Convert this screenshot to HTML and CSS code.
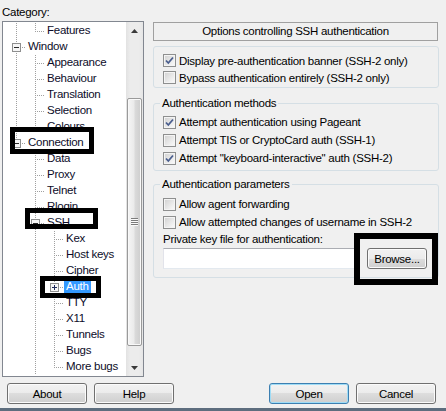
FILE: index.html
```html
<!DOCTYPE html>
<html>
<head>
<meta charset="utf-8">
<link rel="stylesheet" href="styles.css">
</head>
<body>
<div class="dlg">
  <div class="main">
    <div class="left">
      <div class="cat-label">Category:</div>
      <div class="treebox">
        <div class="tree">
          <div class="row"><span class="g v"></span><span class="c l"></span><span class="txt">Features</span></div>
          <div class="row"><span class="c t"><svg class="exp" width="9" height="9" viewBox="0 0 9 9"><rect x=".5" y=".5" width="8" height="8" fill="#f6f6f6" stroke="#8e8f8f"/><path d="M2 4.5h5" stroke="#2a2a2a"/></svg></span><span class="txt">Window</span></div>
          <div class="row"><span class="g v"></span><span class="c t"></span><span class="txt">Appearance</span></div>
          <div class="row"><span class="g v"></span><span class="c t"></span><span class="txt">Behaviour</span></div>
          <div class="row"><span class="g v"></span><span class="c t"></span><span class="txt">Translation</span></div>
          <div class="row"><span class="g v"></span><span class="c t"></span><span class="txt">Selection</span></div>
          <div class="row"><span class="g v"></span><span class="c l"></span><span class="txt">Colours</span></div>
          <div class="row"><span class="c l"><svg class="exp" width="9" height="9" viewBox="0 0 9 9"><rect x=".5" y=".5" width="8" height="8" fill="#f6f6f6" stroke="#8e8f8f"/><path d="M2 4.5h5" stroke="#2a2a2a"/></svg></span><span class="txt">Connection</span></div>
          <div class="row"><span class="g"></span><span class="c t"></span><span class="txt">Data</span></div>
          <div class="row"><span class="g"></span><span class="c t"></span><span class="txt">Proxy</span></div>
          <div class="row"><span class="g"></span><span class="c t"></span><span class="txt">Telnet</span></div>
          <div class="row"><span class="g"></span><span class="c t"></span><span class="txt">Rlogin</span></div>
          <div class="row"><span class="g"></span><span class="c t"><svg class="exp" width="9" height="9" viewBox="0 0 9 9"><rect x=".5" y=".5" width="8" height="8" fill="#f6f6f6" stroke="#8e8f8f"/><path d="M2 4.5h5" stroke="#2a2a2a"/></svg></span><span class="txt">SSH</span></div>
          <div class="row"><span class="g"></span><span class="g v"></span><span class="c t"></span><span class="txt">Kex</span></div>
          <div class="row"><span class="g"></span><span class="g v"></span><span class="c t"></span><span class="txt">Host keys</span></div>
          <div class="row"><span class="g"></span><span class="g v"></span><span class="c t"></span><span class="txt">Cipher</span></div>
          <div class="row"><span class="g"></span><span class="g v"></span><span class="c t"><svg class="exp" width="9" height="9" viewBox="0 0 9 9"><rect x=".5" y=".5" width="8" height="8" fill="#f6f6f6" stroke="#8e8f8f"/><path d="M2 4.5h5M4.5 2v5" stroke="#1e2a5a"/></svg></span><span class="txt sel">Auth</span></div>
          <div class="row"><span class="g"></span><span class="g v"></span><span class="c t"></span><span class="txt">TTY</span></div>
          <div class="row"><span class="g"></span><span class="g v"></span><span class="c t"></span><span class="txt">X11</span></div>
          <div class="row"><span class="g"></span><span class="g v"></span><span class="c t"></span><span class="txt">Tunnels</span></div>
          <div class="row"><span class="g"></span><span class="g v"></span><span class="c t"></span><span class="txt">Bugs</span></div>
          <div class="row"><span class="g"></span><span class="g v"></span><span class="c l"></span><span class="txt">More bugs</span></div>
        </div>
        <div class="vscroll">
          <div class="sb-btn"><svg width="7" height="4" viewBox="0 0 7 4"><path d="M3.5 0L7 4H0z" fill="#3a3a3a"/></svg></div>
          <div class="sb-track"><div class="sb-thumb"><span class="grip"></span></div></div>
          <div class="sb-btn"><svg width="7" height="4" viewBox="0 0 7 4"><path d="M0 0h7L3.5 4z" fill="#3a3a3a"/></svg></div>
        </div>
      </div>
    </div>
    <div class="right">
      <div class="header">Options controlling SSH authentication</div>
      <div class="box g1">
        <div class="cbrow"><span class="cb"><svg width="11" height="11" viewBox="0 0 11 11"><path d="M2 5.5l2.3 2.5L9 2.5" fill="none" stroke="#4a5e8e" stroke-width="1.8"/></svg></span><span>Display pre-authentication banner (SSH-2 only)</span></div>
        <div class="cbrow"><span class="cb"></span><span>Bypass authentication entirely (SSH-2 only)</span></div>
      </div>
      <fieldset class="box fs2">
        <legend>Authentication methods</legend>
        <div class="cbrow"><span class="cb"><svg width="11" height="11" viewBox="0 0 11 11"><path d="M2 5.5l2.3 2.5L9 2.5" fill="none" stroke="#4a5e8e" stroke-width="1.8"/></svg></span><span>Attempt authentication using Pageant</span></div>
        <div class="cbrow"><span class="cb"></span><span>Attempt TIS or CryptoCard auth (SSH-1)</span></div>
        <div class="cbrow"><span class="cb"><svg width="11" height="11" viewBox="0 0 11 11"><path d="M2 5.5l2.3 2.5L9 2.5" fill="none" stroke="#4a5e8e" stroke-width="1.8"/></svg></span><span>Attempt "keyboard-interactive" auth (SSH-2)</span></div>
      </fieldset>
      <fieldset class="box fs3">
        <legend>Authentication parameters</legend>
        <div class="cbrow"><span class="cb"></span><span>Allow agent forwarding</span></div>
        <div class="cbrow"><span class="cb"></span><span>Allow attempted changes of username in SSH-2</span></div>
        <div class="lbl">Private key file for authentication:</div>
        <div class="keyrow"><span class="input"></span><button class="btn browse">Browse...</button></div>
      </fieldset>
    </div>
  </div>
  <div class="buttons">
    <button class="btn">About</button>
    <button class="btn">Help</button>
    <button class="btn default">Open</button>
    <button class="btn">Cancel</button>
  </div>
  <div class="edge"></div>

  <div class="mark m-conn"></div>
  <div class="mark m-ssh"></div>
  <div class="mark m-auth"></div>
  <div class="mark m-browse"></div>
</div>
</body>
</html>
```
FILE: styles.css
```css
* { box-sizing: border-box; }
html, body { margin: 0; padding: 0; }
body {
  background: #f0f0f0;
  font-family: "Liberation Sans", Arial, sans-serif;
  font-size: 11.5px;
  letter-spacing: -0.27px;
  color: #000;
  width: 446px;
  height: 411px;
  overflow: hidden;
}
.dlg { position: relative; width: 446px; height: 411px; display: flex; flex-direction: column; }
.main { display: flex; padding-left: 2px; height: 377px; }

/* left: category tree */
.left { width: 142px; display: flex; flex-direction: column; }
.cat-label { height: 21px; padding-top: 5px; line-height: 14px; }
.treebox { height: 356px; border: 1px solid #828790; background: #fff; display: flex; }
.tree { flex: 1; padding-top: 1px; overflow: hidden; color: #0c0c28; }
.row { display: flex; height: 16px; line-height: 15px; white-space: nowrap; }
.g { width: 19px; flex: none; }
.g.v { background: repeating-linear-gradient(#a0a0a0 0 1px, transparent 1px 2px) 13px 0 / 1px 100% no-repeat; }
.c { width: 23px; flex: none; display: flex; align-items: center; }
.c.t {
  background:
    repeating-linear-gradient(to right, #a0a0a0 0 1px, transparent 1px 2px) 15px 8px / 8px 1px no-repeat,
    repeating-linear-gradient(#a0a0a0 0 1px, transparent 1px 2px) 13px 0 / 1px 100% no-repeat;
}
.c.l {
  background:
    repeating-linear-gradient(to right, #a0a0a0 0 1px, transparent 1px 2px) 15px 8px / 8px 1px no-repeat,
    repeating-linear-gradient(#a0a0a0 0 1px, transparent 1px 2px) 13px 0 / 1px 9px no-repeat;
}
.exp { display: block; margin-left: 9px; }
.txt { padding: 0 2px; }
.sel { background: #3399ff; color: #fff; }

.vscroll { width: 17px; flex: none; display: flex; flex-direction: column; background: linear-gradient(to right, #e2e2e2, #ececec 25%, #ececec 75%, #e6e6e6); }
.sb-btn { height: 17px; display: flex; align-items: center; justify-content: center; }
.sb-track { flex: 1; display: flex; flex-direction: column; align-items: center; }
.sb-thumb {
  margin-top: 59px; height: 248px; width: 15px;
  border: 1px solid #9a9a9a; border-radius: 2px;
  background: linear-gradient(to right, #f5f5f5 0%, #ebebeb 45%, #dadada 55%, #cdcdcd 100%);
  box-shadow: inset 0 0 0 1px #f9f9f9;
  display: flex; align-items: center; justify-content: center;
}
.grip { width: 7px; height: 8px; background: repeating-linear-gradient(#7c7c7c 0 1px, #fafafa 1px 2px); }

/* right panel */
.right { width: 286px; margin-left: 9px; padding-top: 22px; display: flex; flex-direction: column; }
.header { width: 285px; height: 19px; border: 1px solid #a0a0a0; text-align: center; line-height: 17px; }
.box { border: 1px solid #d5dfe5; border-radius: 3px; margin: 0; min-inline-size: 0; }
.g1 { margin-top: 5px; height: 42px; padding: 5px 0 0 9px; }
.cbrow { display: flex; align-items: center; gap: 3px; height: 17px; white-space: nowrap; }
.cb {
  width: 13px; height: 13px; flex: none;
  border: 1px solid #8e8f8f;
  background: linear-gradient(135deg, #d0d0d0, #f6f6f6 85%);
  box-shadow: inset 0 0 0 1px #f4f4f4;
  display: flex; align-items: center; justify-content: center;
}
fieldset.box { padding: 3px 0 3px 9px; }
legend { padding: 0 2px; margin-left: -3px; line-height: 14px; height: 14px; }
.fs2 { margin-top: 8px; }
.fs2 .cbrow { height: 18px; }
.fs3 { margin-top: 6px; padding-bottom: 8px !important; padding-top: 4px !important; }
.fs3 .cbrow { height: 18px; }
.lbl { height: 17px; line-height: 17px; }
.keyrow { display: flex; height: 21px; gap: 8px; }
.input {
  width: 196px; height: 21px; background: #fff;
  border: 1px solid; border-color: #abadb3 #dbdfe6 #e3e9ef #e2e3ea;
}

.btn {
  font: inherit; letter-spacing: inherit; color: #000; padding: 0; margin: 0;
  width: 80px; height: 21px;
  border: 1px solid #707070; border-radius: 3px;
  background: linear-gradient(#f2f2f2 0%, #ebebeb 50%, #dddddd 50%, #cfcfcf 100%);
  box-shadow: inset 0 0 0 1px #fbfbfb;
}
.browse { width: 60px; }
.default { border-color: #3c7fb1; box-shadow: inset 0 0 0 1px #9fdcf6; }

.buttons { display: flex; gap: 7px; margin-top: 6px; padding: 0 10px 0 7px; height: 21px; }
.buttons .default { margin-left: auto; }
.edge { margin-top: 4px; height: 3px; background: #5d6d7e; }

/* annotation frames drawn over the screenshot */
.mark { position: absolute; border: 5px solid #000; }
.m-conn { left: 10px; top: 127px; width: 84px; height: 27px; }
.m-ssh { left: 25px; top: 208px; width: 73px; height: 21px; }
.m-auth { left: 40px; top: 276px; width: 61px; height: 22px; }
.m-browse { left: 354px; top: 233px; width: 84px; height: 52px; border-width: 6px; }
```
